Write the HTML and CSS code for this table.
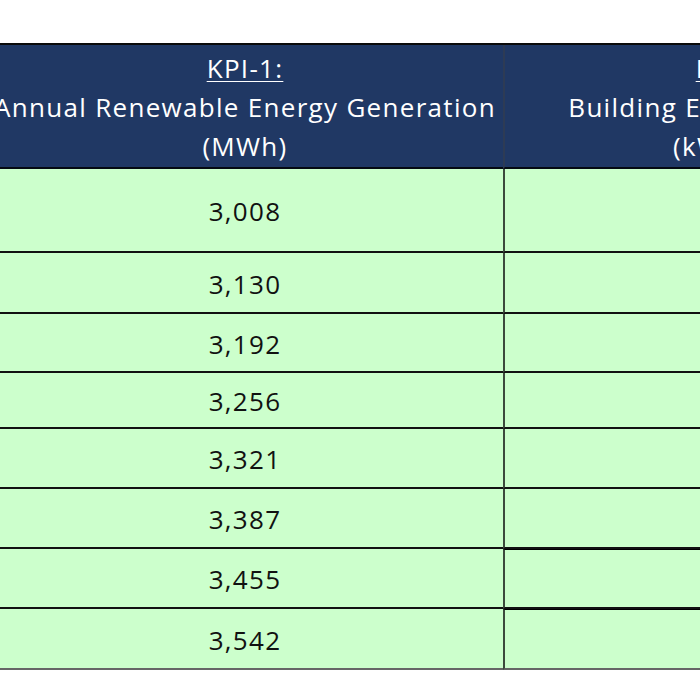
FILE: index.html
```html
<!DOCTYPE html>
<html>
<head>
<meta charset="utf-8">
<link rel="stylesheet" href="styles.css">
</head>
<body>
<div class="sheet">
  <div class="kpi-table">
    <div class="cell head"><span class="kpi">KPI-1:</span><span>Annual Renewable Energy Generation</span><span>(MWh)</span></div>
    <div class="cell head right"><span class="kpi">KPI-2:</span><span>Building Energy Intensity</span><span>(kWh/m²)</span></div>

    <div class="cell val">3,008</div><div class="cell val right"></div>
    <div class="cell val">3,130</div><div class="cell val right"></div>
    <div class="cell val">3,192</div><div class="cell val right"></div>
    <div class="cell val">3,256</div><div class="cell val right"></div>
    <div class="cell val">3,321</div><div class="cell val right"></div>
    <div class="cell val">3,387</div><div class="cell val right"></div>
    <div class="cell val">3,455</div><div class="cell val right thick"></div>
    <div class="cell val last">3,542</div><div class="cell val right last thick"></div>
  </div>
</div>
</body>
</html>
```

FILE: styles.css
```css
html, body {
  margin: 0;
  padding: 0;
  background: #ffffff;
  overflow: hidden;
  width: 700px;
  height: 700px;
}

.sheet {
  padding-top: 43px;
  margin-left: -13px;
}

.kpi-table {
  display: grid;
  grid-template-columns: 516px 460px;
  grid-template-rows: 124px 84px 61px 59px 56px 60px 60px 60px 61px;
  border-top: 2px solid #0b0b0b;
  width: 976px;
  font-family: "Open Sans", "Liberation Sans", sans-serif;
  font-size: 26px;
  letter-spacing: 1.3px;
}

.cell {
  box-sizing: border-box;
  border-bottom: 2px solid #111;
  display: flex;
  flex-direction: column;
  align-items: center;
  justify-content: center;
}

.cell.right {
  border-left: 2px solid #3c4a3c;
}

.head {
  background: #203864;
  color: #ffffff;
  line-height: 39px;
  border-bottom: 2px solid #050a12;
  padding-top: 2px;
}

.head.right {
  border-left-color: #2d3b55;
}

.kpi {
  text-decoration: underline;
  text-decoration-thickness: 1px;
  text-underline-offset: 3px;
}

.val {
  background: #ccffcc;
  color: #111;
  padding-top: 2px;
}

.val.last {
  border-bottom: 2px solid #666;
}

.val.thick {
  border-top: 1px solid #000;
}
```
